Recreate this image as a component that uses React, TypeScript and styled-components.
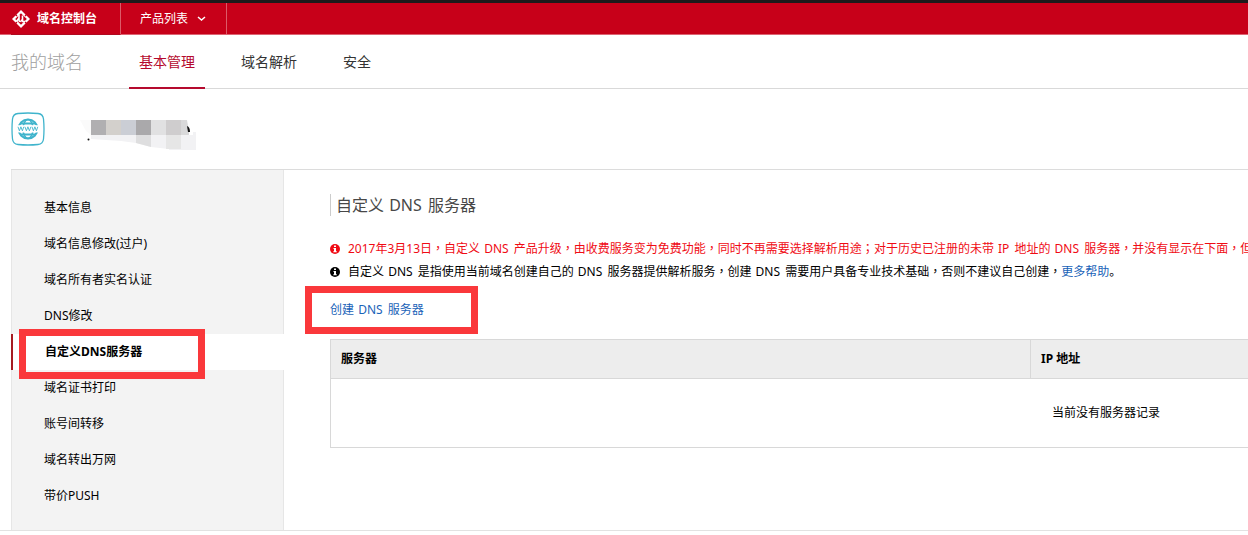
import React from 'react';
import styled, { createGlobalStyle, css } from 'styled-components';

const Global = createGlobalStyle`
  * { box-sizing: border-box; }
  body {
    margin: 0;
    overflow-x: hidden;
    background: #fff;
    color: #000;
    font: 12px/24px "Noto Sans", "Noto Sans CJK SC", sans-serif;
  }
  a { color: inherit; text-decoration: none; }
  h1, h2, p, ul { margin: 0; padding: 0; }
  ul { list-style: none; }
`;

const TopBar = styled.header`
  display: flex;
  height: 35px;
  border-top: 3px solid #1d1a1b;
  border-bottom: 1px solid #dd6473;
  background: #c70019;
  color: #fff;
`;

const Brand = styled.a`
  display: flex;
  align-items: center;
  gap: 6px;
  width: 110px;
  margin: 0 0 -1px 11px;
  border-right: 1px solid #dc5a68;
  border-bottom: 1px solid #b00a20;
  font-weight: 700;
`;

const ProductMenu = styled.button`
  display: flex;
  align-items: center;
  gap: 9px;
  width: 106px;
  padding: 0 0 0 19px;
  border: 0;
  border-right: 1px solid #dc5a68;
  background: none;
  color: inherit;
  font: inherit;
`;

const SubNav = styled.nav`
  display: flex;
  height: 54px;
  border-bottom: 1px solid #d9d9d9;
`;

const NavTitle = styled.h1`
  width: 129px;
  padding-left: 11px;
  color: #a0a0a0;
  font-size: 18px;
  font-weight: 300;
  line-height: 54px;
`;

const NavTab = styled.a<{ $active?: boolean }>`
  height: 54px;
  margin-right: 26px;
  padding: 0 10px;
  border-bottom: 2px solid transparent;
  color: #333;
  font-size: 14px;
  line-height: 54px;
  ${p => p.$active && css`
    border-color: #b50a2e;
    color: #b50a2e;
  `}
`;

const DomainHead = styled.div`
  display: flex;
  align-items: flex-start;
  gap: 34px;
  height: 80px;
  padding: 23px 0 0 11px;
`;

const Columns = styled.div`
  display: flex;
  margin-left: 11px;
  border-top: 1px solid #dcdcdc;
`;

const Sidebar = styled.aside`
  flex: none;
  width: 273px;
  padding: 20px 0 16px;
  border: solid #e6e6e6;
  border-width: 0 1px;
  background: #f3f3f3;
`;

const SideItem = styled.li<{ $active?: boolean }>`
  position: relative;
  height: 36px;
  padding-left: 32px;
  line-height: 36px;
  ${p => p.$active && css`
    margin: 0 -1px;
    border-left: 2px solid #a61c22;
    background: #fff;
    font-weight: 700;
  `}
`;

const Marker = styled.span<{ $side?: boolean }>`
  position: absolute;
  pointer-events: none;
  border: 7px solid #fa383b;
  ${p => p.$side
    ? css`left: 6px; top: -5px; width: 186px; height: 50px;`
    : css`left: -25px; top: -12px; width: 173px; height: 48px;`}
`;

const Content = styled.main`
  flex: 1;
  min-width: 0;
  padding: 24px 0 0 46px;
`;

const Title = styled.h2`
  margin-bottom: 21px;
  padding-left: 5px;
  border-left: 1px solid #ccc;
  color: #484848;
  font-size: 16px;
  font-weight: 400;
  line-height: 22px;
`;

const Notice = styled.p<{ $warn?: boolean }>`
  display: flex;
  align-items: center;
  gap: 8px;
  height: 23px;
  color: ${p => (p.$warn ? '#f00b14' : '#000')};
  white-space: nowrap;
  svg { flex: none; }
`;

const Term = styled.span`
  padding: 0 2px 0 1px;
`;

const Pause = styled.span`
  font-family: "Noto Sans CJK TC", sans-serif;
  line-height: 1;
`;

const Blue = styled.a`
  color: #1a63b8;
`;

const CreateRow = styled.div`
  position: relative;
  margin: 15px 0 17px;
`;

const TableWrap = styled.div`
  overflow: hidden;
`;

const Servers = styled.table`
  width: 1480px;
  border-collapse: collapse;
  border: 1px solid #d8d8d8;
  table-layout: fixed;
`;

const HeadCell = styled.th<{ $wide?: boolean }>`
  width: ${p => (p.$wide ? '700px' : 'auto')};
  height: 39px;
  padding: 0 10px;
  border: 1px solid #d8d8d8;
  background: #ededed;
  text-align: left;
`;

const EmptyCell = styled.td`
  height: 69px;
  padding: 0 0 0 72px;
  text-align: center;
`;

const Footer = styled.footer`
  height: 1px;
  background: #e2e2e2;
`;

const BrandLogo = () => (
  <svg width="20" height="20" viewBox="0 0 20 20">
    <path d="M10 1 19 10 10 19 1 10Z" fill="#fff" />
    <path d="M10 4.200 15.800 10 10 15.800 4.200 10Z" fill="#c70019" />
    <path d="M3.500 4.500 6 7M16.500 4.500 14 7M3.500 15.500 6 13M16.500 15.500 14 13" stroke="#c70019" strokeWidth="1.200" />
    <path d="M8 6v5q0 1.500 1.200 1.500T11.500 10V6.500M11.500 7v5.500h2.500M8 9l-2.500 3.500" fill="none" stroke="#fff" strokeWidth="1.600" />
  </svg>
);

const GlobeIcon = () => (
  <svg width="34" height="34" viewBox="0 0 34 34" fill="none">
    <path d="M7 1.500Q17 .5 27 1.500 32 2 32.500 7q1 10 0 20-.5 5-5.500 5.500-10 1-20 0Q2 32 1.500 27q-1-10 0-20Q2 2 7 1.500Z" stroke="#3fb4cc" strokeWidth="1.300" />
    <circle cx="17" cy="17" r="9.500" stroke="#3fb4cc" strokeWidth="2" />
    <ellipse cx="17" cy="17" rx="5" ry="9.500" stroke="#3fb4cc" strokeWidth="1.500" />
    <path d="M9 11.500h16M9 22.500h16" stroke="#3fb4cc" strokeWidth="2" />
    <path d="M6 13.200h22v7.300H6z" fill="#fff" />
    <path d="m7 14.800 1.400 4 1.500-4 1.500 4 1.400-4M13.900 14.800l1.500 4 1.500-4 1.500 4 1.500-4M21 14.800l1.400 4 1.500-4 1.500 4 1.400-4" stroke="#3fb4cc" strokeWidth=".9" />
  </svg>
);

const mosaic = ['#b0afb1', '#d3d0cc', '#cbced5', '#aaa9ab', '#e1e1e2', '#cfcdce'];

const MaskedDomain = () => (
  <svg width="118" height="40" viewBox="0 0 118 40">
    <path d="M1 8h11v15l-5-4Z" fill="#fafafa" />
    <path d="M12 23h102v-3h3v18H90V37L72 35 57 31 42 29 12 27Z" fill="#f2f2f4" />
    <path d="M57 23h15v12l-15-4Z" fill="#dededf" />
    <path d="M87 23h15v14H87Z" fill="#e6e6e6" />
    {mosaic.map((c, i) => <rect key={i} x={12 + i * 15} y="8" width="15" height="15" fill={c} />)}
    <path d="M102 8h6l2 12v3h-8Z" fill="#d9d9da" />
    <path d="M108 14q3 1 3 6h-2z" fill="#111" />
    <circle cx="9.500" cy="27.500" r="1" fill="#111" />
  </svg>
);

const InfoIcon = () => (
  <svg width="10" height="10" viewBox="0 0 10 10">
    <circle cx="5" cy="5" r="5" fill="currentColor" />
    <path d="M4 1.500h2V3H4zM3.500 4H6v3.200h.8v1H3.300v-1H4V5h-.5z" fill="#fff" />
  </svg>
);

/* Spaces Latin terms and centres commas and semicolons inside Chinese copy. */
const Copy = ({ text }: { text: string }) => (
  <>
    {text.split(/(DNS|IP|[，；])/).map((part, i) => {
      if (part === 'DNS' || part === 'IP') return <Term key={i}>{part}</Term>;
      if (part === '，' || part === '；') return <Pause key={i} lang="zh-TW">{part}</Pause>;
      return part;
    })}
  </>
);

const tabs = ['基本管理', '域名解析', '安全'];
const links = ['基本信息', '域名信息修改(过户)', '域名所有者实名认证', 'DNS修改', '自定义DNS服务器', '域名证书打印', '账号间转移', '域名转出万网', '带价PUSH'];

export default function App() {
  return (
    <>
      <Global />
      <TopBar>
        <Brand href="#"><BrandLogo />域名控制台</Brand>
        <ProductMenu type="button">
          产品列表
          <svg width="9" height="6" viewBox="0 0 9 6" fill="none" stroke="#fff" strokeWidth="1.500"><path d="m1 1 3.500 3L8 1" /></svg>
        </ProductMenu>
      </TopBar>
      <SubNav>
        <NavTitle>我的域名</NavTitle>
        {tabs.map((t, i) => <NavTab key={t} href="#" $active={i === 0}>{t}</NavTab>)}
      </SubNav>
      <DomainHead><GlobeIcon /><MaskedDomain /></DomainHead>
      <Columns>
        <Sidebar>
          <ul>
            {links.map((t, i) => (
              <SideItem key={t} $active={i === 4}>
                <a href="#">{t}</a>
                {i === 4 && <Marker $side />}
              </SideItem>
            ))}
          </ul>
        </Sidebar>
        <Content>
          <Title><Copy text="自定义 DNS 服务器" /></Title>
          <Notice $warn>
            <InfoIcon />
            <span><Copy text="2017年3月13日，自定义 DNS 产品升级，由收费服务变为免费功能，同时不再需要选择解析用途；对于历史已注册的未带 IP 地址的 DNS 服务器，并没有显示在下面，但" /></span>
          </Notice>
          <Notice>
            <InfoIcon />
            <span>
              <Copy text="自定义 DNS 是指使用当前域名创建自己的 DNS 服务器提供解析服务，创建 DNS 需要用户具备专业技术基础，否则不建议自己创建，" />
              <Blue href="#">更多帮助</Blue>。
            </span>
          </Notice>
          <CreateRow>
            <Blue href="#"><Copy text="创建 DNS 服务器" /></Blue>
            <Marker />
          </CreateRow>
          <TableWrap>
            <Servers>
              <thead><tr><HeadCell $wide>服务器</HeadCell><HeadCell>IP 地址</HeadCell></tr></thead>
              <tbody><tr><EmptyCell colSpan={2}>当前没有服务器记录</EmptyCell></tr></tbody>
            </Servers>
          </TableWrap>
        </Content>
      </Columns>
      <Footer />
    </>
  );
}
